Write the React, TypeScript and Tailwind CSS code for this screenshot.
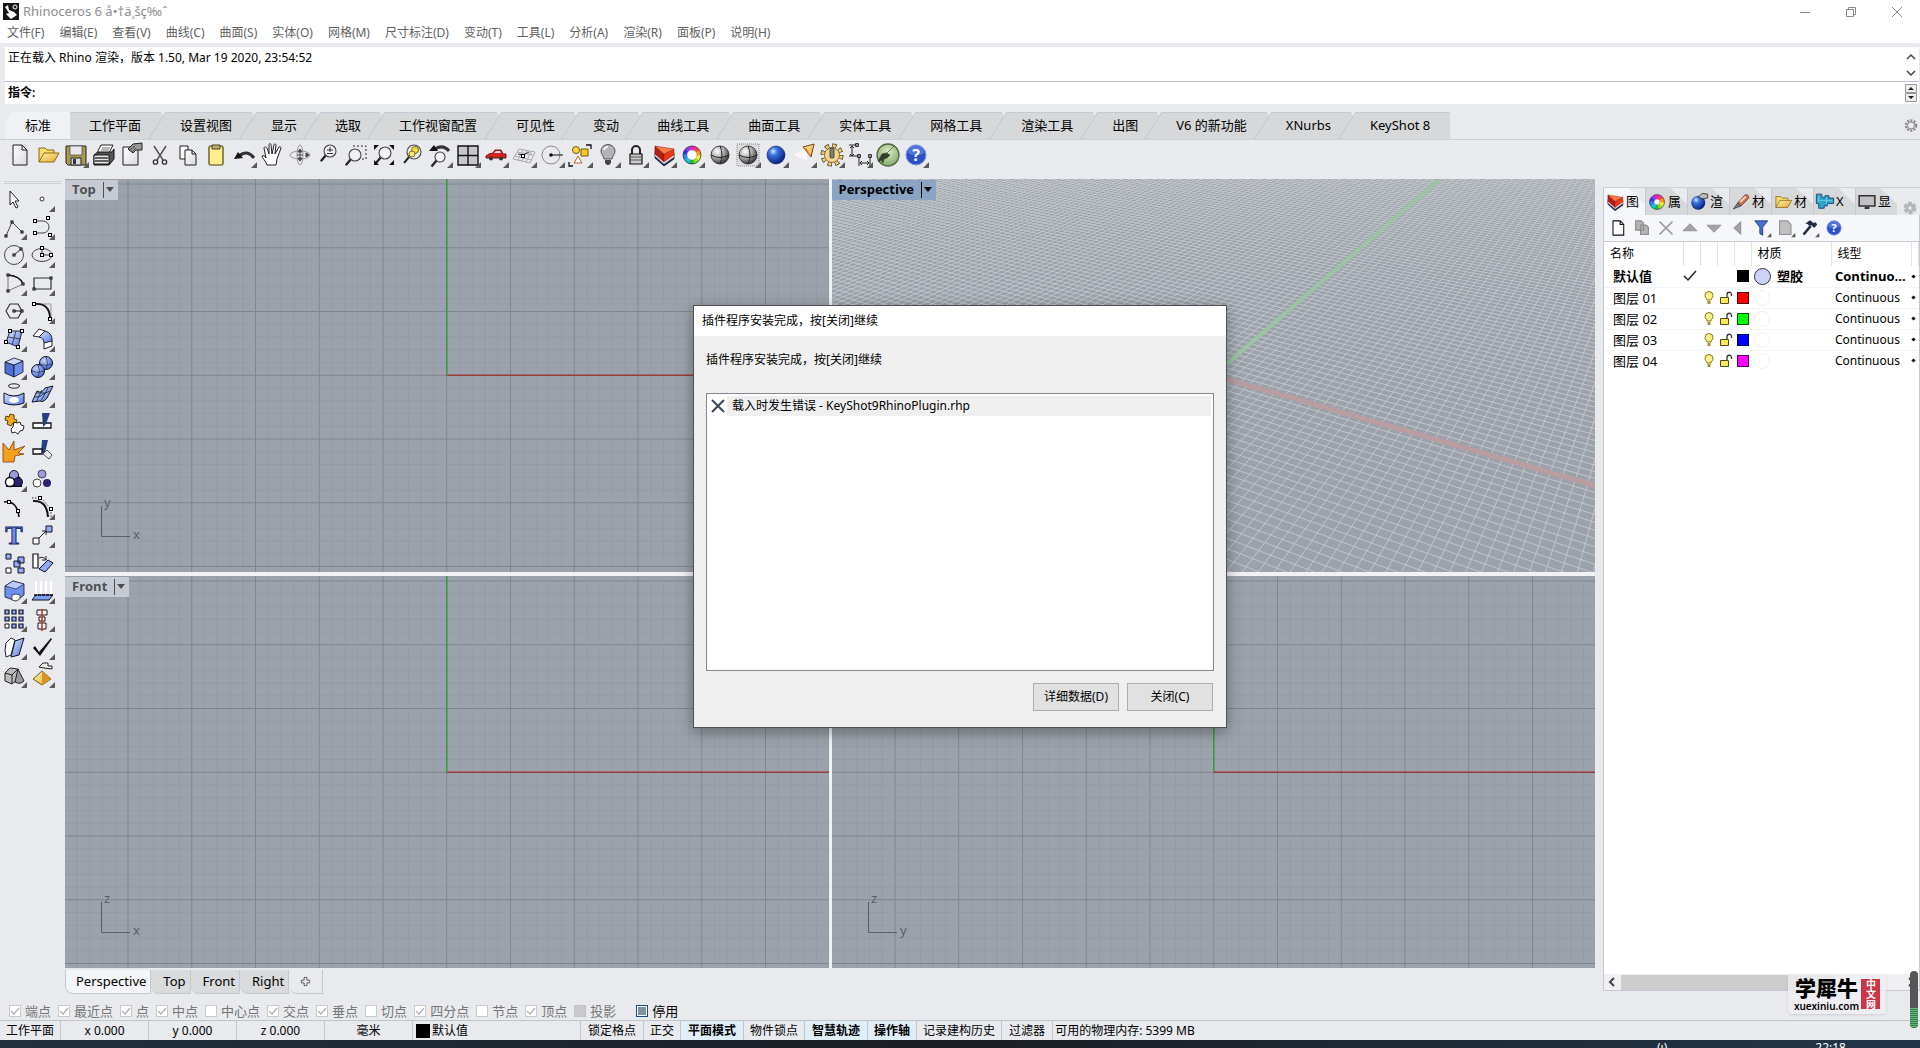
import { useState, type ReactNode } from "react";

const INK = "#1c1c1c";

type Tool = { name: string; art: ReactNode; more?: boolean };

const menus = ["文件(F)", "编辑(E)", "查看(V)", "曲线(C)", "曲面(S)", "实体(O)", "网格(M)", "尺寸标注(D)", "变动(T)", "工具(L)", "分析(A)", "渲染(R)", "面板(P)", "说明(H)"];

const toolTabs = ["标准", "工作平面", "设置视图", "显示", "选取", "工作视窗配置", "可见性", "变动", "曲线工具", "曲面工具", "实体工具", "网格工具", "渲染工具", "出图", "V6 的新功能", "XNurbs", "KeyShot 8"];

const osnaps = [
    { label: "端点", on: true },
    { label: "最近点", on: true },
    { label: "点", on: true },
    { label: "中点", on: true },
    { label: "中心点", on: false },
    { label: "交点", on: true },
    { label: "垂点", on: true },
    { label: "切点", on: false },
    { label: "四分点", on: true },
    { label: "节点", on: false },
    { label: "顶点", on: true },
];

const layers = [
    { name: "图层 01", color: "#ff0000" },
    { name: "图层 02", color: "#00ff00" },
    { name: "图层 03", color: "#0000ff" },
    { name: "图层 04", color: "#ff00ff" },
];

// Shared gradients, referenced by id from every icon
function Gradients() {
    return (
        <svg className="absolute size-0" aria-hidden="true">
            <defs>
                <radialGradient id="ballGray" cx="35%" cy="30%" r="75%">
                    <stop offset="0" stopColor="#fff" />
                    <stop offset=".5" stopColor="#a9a9a9" />
                    <stop offset="1" stopColor="#2b2b2b" />
                </radialGradient>
                <radialGradient id="ballBlue" cx="35%" cy="30%" r="75%">
                    <stop offset="0" stopColor="#d5e6ff" />
                    <stop offset=".3" stopColor="#3c73e0" />
                    <stop offset="1" stopColor="#041a72" />
                </radialGradient>
                <radialGradient id="ballSoft" cx="35%" cy="30%" r="75%">
                    <stop offset="0" stopColor="#c4d2ff" />
                    <stop offset="1" stopColor="#4464cf" />
                </radialGradient>
                <radialGradient id="ballGreen" cx="50%" cy="35%" r="70%">
                    <stop offset="0" stopColor="#dcecc8" />
                    <stop offset="1" stopColor="#7da463" />
                </radialGradient>
                <linearGradient id="paper" x1="0" y1="0" x2="1" y2="1">
                    <stop offset="0" stopColor="#fff" />
                    <stop offset="1" stopColor="#d9dade" />
                </linearGradient>
                <linearGradient id="face" x1="0" y1="0" x2="1" y2="1">
                    <stop offset="0" stopColor="#dbe5ff" />
                    <stop offset="1" stopColor="#5578dd" />
                </linearGradient>
                <linearGradient id="gold" x1="0" y1="0" x2="1" y2="1">
                    <stop offset="0" stopColor="#fff3b0" />
                    <stop offset="1" stopColor="#e5a72c" />
                </linearGradient>
            </defs>
        </svg>
    );
}

function Dots({ at, size = 3 }: { at: number[][]; size?: number }) {
    return (
        <>
            {at.map(([x, y]) => (
                <rect key={`${x}-${y}`} x={x - size / 2} y={y - size / 2} width={size} height={size} fill="#fff" stroke="#000" />
            ))}
        </>
    );
}

function Lens({ x, y, r = 5.5 }: { x: number; y: number; r?: number }) {
    return (
        <>
            <path d={`M${x - r * 0.7} ${y + r * 0.7}L${x - r * 0.7 - 5} ${y + r * 0.7 + 6}`} stroke="#222" strokeWidth="2.2" />
            <circle cx={x} cy={y} r={r} fill="#f3f4f6" fillOpacity=".7" stroke="#444" strokeWidth="1.1" />
        </>
    );
}

function ColorWheel({ cx, cy, r, w }: { cx: number; cy: number; r: number; w: number }) {
    const hues = ["#f43", "#f90", "#fe2", "#8d2", "#1b4", "#1cc", "#28f", "#33e", "#93e", "#e2b"];
    return (
        <>
            {hues.map((c, i) => {
                const a = (i / hues.length) * Math.PI * 2 - 1.2;
                const b = ((i + 1.1) / hues.length) * Math.PI * 2 - 1.2;
                return <path key={c} d={`M${cx + r * Math.cos(a)} ${cy + r * Math.sin(a)}A${r} ${r} 0 0 1 ${cx + r * Math.cos(b)} ${cy + r * Math.sin(b)}`} fill="none" stroke={c} strokeWidth={w} />;
            })}
            <circle cx={cx} cy={cy} r={r + w / 2} fill="none" stroke="#333" strokeWidth=".8" />
            <circle cx={cx} cy={cy} r={Math.max(r - w / 2, 0.5)} fill="#fff" stroke="#777" strokeWidth=".5" />
        </>
    );
}

const layerArt = (
    <>
        <path d="M5 12v5l9 8 10-7v-5z" fill="#1c2c66" stroke="#111" strokeWidth=".7" />
        <path d="M5 10v5l9 8 10-7v-5z" fill="#fff" stroke="#777" strokeWidth=".6" />
        <path d="M5 5l9 8v8l-9-8z" fill="#b81c10" stroke="#611" strokeWidth=".6" />
        <path d="M14 13l10-5v6l-10 7z" fill="#e83a1b" stroke="#8c2010" strokeWidth=".5" />
        <path d="M5 5l19 3-10 5z" fill="#fb7a45" stroke="#8c2010" strokeWidth=".5" />
    </>
);

const openArt = (
    <>
        <path d="M5 21V7h6l2 2h7v3" fill="#f7dc6e" stroke="#8a6a10" />
        <path d="M5 21l5-9h15l-5 9z" fill="url(#gold)" stroke="#8a6a10" />
    </>
);

const helpArt = (
    <>
        <circle cx="14" cy="14" r="10" fill="#2c50c8" stroke="#7c93dd" />
        <path d="M5.500 12a8.500 8.500 0 0 1 17 0c-5 3-12 3-17 0z" fill="#6b8bea" fillOpacity=".6" />
        <text x="14" y="20" fontSize="16" fontWeight="700" textAnchor="middle" fill="#fff">?</text>
    </>
);

const shadedBall = (
    <>
        <circle cx="14" cy="14" r="9" fill="url(#ballGray)" stroke="#222" strokeWidth=".8" />
        <path d="M5 14q9 5 18 0M14 5q4 9 0 18" fill="none" stroke="#222" />
    </>
);

const mainTools: Tool[] = [
    { name: "新建", art: <path d="M7 4h9l5 5v15H7zM16 4v5h5" fill="url(#paper)" stroke={INK} /> },
    { name: "打开", art: openArt },
    { name: "保存", more: true, art: <><path d="M4 5h20v19H6l-2-2z" fill="#a89a50" stroke="#222" /><path d="M8 5h12v9H8z" fill="#e8e8ea" stroke="#444" strokeWidth=".7" /><path d="M9 17h10v7H9z" fill="#ddd" stroke="#222" /><path d="M11 18h3v5h-3z" fill="#333" /></> },
    { name: "打印", art: <><path d="M11 4h12l-4 8H7z" fill="#fff" stroke="#222" /><path d="M12 7h8M11 9h8" stroke="#777" /><path d="M4 14l4-3h14l2-3v10l-5 6H4z" fill="#555" stroke="#111" /><path d="M4 14h15v9H4z" fill="#e8e8e8" stroke="#111" /><path d="M5 17h13M5 20h13" stroke="#333" strokeWidth="1.400" /></> },
    { name: "文件属性", art: <><path d="M5 6h15v18H5z" fill="url(#paper)" stroke={INK} /><path d="M10 8l5-5 9-1v7h-6l-3 3z" fill="#999" stroke="#222" /><path d="M12 9l5-4M14 11l4-4" stroke="#222" strokeWidth=".7" /></> },
    { name: "剪切", art: <><path d="M8 5l9 14M20 5l-9 14" stroke="#555" strokeWidth="1.500" /><circle cx="9.500" cy="21" r="2.200" fill="none" stroke="#333" strokeWidth="1.300" /><circle cx="18.500" cy="21" r="2.200" fill="none" stroke="#333" strokeWidth="1.300" /></> },
    { name: "复制", art: <><path d="M6 5h8v13H6z" fill="#fff" stroke={INK} /><path d="M11 9h7l4 4v11H11zM18 9v4h4" fill="url(#paper)" stroke={INK} /></> },
    { name: "粘贴", art: <><rect x="7" y="5" width="14" height="19" rx="1.500" fill="#fdf08c" stroke="#4a4210" strokeWidth="1.200" /><path d="M10 4h8v4h-8z" fill="#b8b27a" stroke="#4a4210" /></> },
    { name: "复原", more: true, art: <><path d="M9 15q8-7 15 2" fill="none" stroke="#333" strokeWidth="3" /><path d="M4 18l4-7 5 6z" fill="#111" /></> },
    { name: "平移", art: <path d="M9 24c-1-4-5-7-5-9 1-1 3 0 4 2L6 7c1-2 2-1 3 0l2 6V4c0-2 2-2 2 0l1 9 2-9c0-2 2-1 2 0l-1 9 4-7c1-1 2 0 2 1l-4 11-1 6z" fill="#fff" stroke="#222" /> },
    { name: "旋转视图", art: <><ellipse cx="14" cy="14" rx="10" ry="4" fill="none" stroke="#999" /><ellipse cx="14" cy="14" rx="3" ry="10" fill="none" stroke="#999" /><path d="M14 10v8M11 14h6M14 8l-2 3h4zM14 20l-2-3h4zM20 12l3 2-3 2z" fill="#444" stroke="#444" /></> },
    { name: "缩放", art: <><Lens x={16} y={10} r={6} /><path d="M13 9h6M16 6v5M13 12.500h6" stroke="#333" /></> },
    { name: "框选缩放", art: <><path d="M11 5h13v13H14" fill="none" stroke="#222" strokeDasharray="2 2" /><Lens x={13} y={14} r={6} /></> },
    { name: "缩放至最大范围", art: <><Lens x={15} y={12} r={6} /><path d="M4 4h5L4 9zM24 4v5l-5-5zM4 24v-5l5 5zM24 24h-5l5-5z" fill="#111" /></> },
    { name: "缩放至选取物件", art: <><Lens x={16} y={11} r={7} /><circle cx="17" cy="9" r="3.500" fill="#f2dc39" stroke="#776b10" /><circle cx="14" cy="13" r="3" fill="#f7e96d" stroke="#776b10" /></> },
    { name: "复原视图", more: true, art: <><path d="M9 8q8-5 14 2" fill="none" stroke="#333" strokeWidth="3" /><path d="M3 10l5-6 4 6z" fill="#111" /><Lens x={14} y={16} r={5} /></> },
    { name: "四视图", more: true, art: <><path d="M4 5h20v19H4z" fill="#c6c8cc" stroke="#111" strokeWidth="1.400" /><path d="M14 5v19M4 14.500h20" stroke="#111" strokeWidth="1.400" /></> },
    { name: "设置视图", more: true, art: <><path d="M4 15l3-2 4-1 2-3h6l2 4h3v4H4z" fill="#d2241f" stroke="#7c100e" /><path d="M12 12l2-2h4l1 2z" fill="#cfe0ef" /><circle cx="9" cy="17.500" r="2" fill="#333" /><circle cx="19" cy="17.500" r="2" fill="#333" /></> },
    { name: "工作平面", more: true, art: <><path d="M9 8l16 3-5 11L3 18zM7 11l16 3M5 15l16 4M13 9L8 19M17 10l-5 10M21 11l-5 10" fill="none" stroke="#aaa" /><path d="M13 14l6-3M13 14l-5-1" stroke="#333" /><Dots at={[[13, 15]]} /></> },
    { name: "物件锁点", more: true, art: <><circle cx="13" cy="14" r="9" fill="none" stroke="#888" /><path d="M13 14h12" stroke="#111" /><circle cx="13" cy="14" r="1.800" fill="#111" /></> },
    { name: "选取", more: true, art: <><circle cx="10" cy="9" r="3.500" fill="#ffd53d" stroke="#6b5710" /><path d="M15 8h7v7h-7z" fill="#ffc91f" stroke="#6b5710" /><path d="M12 15l4 7H8z" fill="#fff" stroke="#b5632c" /><path d="M20 4h5v4M3 21v4h4" fill="none" stroke="#111" strokeWidth="1.300" /></> },
    { name: "显示与隐藏", more: true, art: <><path d="M10 18c0-3-3-4-3-8a7 6.500 0 0 1 14 0c0 4-3 5-3 8z" fill="#b3b3b6" stroke="#555" /><path d="M10 9a4 4 0 0 1 4-3" stroke="#fff" strokeWidth="1.500" fill="none" /><path d="M11 19h6v3l-2 2h-2l-2-2z" fill="#444" /></> },
    { name: "锁定", more: true, art: <><path d="M10 13V9a4 4 0 0 1 8 0v4" fill="none" stroke="#222" strokeWidth="2" /><path d="M8 13h12v10H8z" fill="#ccc" stroke="#111" strokeWidth="1.200" /><path d="M9 16h10M9 19h10" stroke="#555" /></> },
    { name: "图层", more: true, art: layerArt },
    { name: "颜色", more: true, art: <ColorWheel cx={14} cy={14} r={7} w={4} /> },
    { name: "着色", art: shadedBall },
    { name: "半透明着色", more: true, art: <><path d="M3 3h22v22H3z" fill="#dcdde0" stroke="#888" strokeDasharray="1 1" />{shadedBall}</> },
    { name: "渲染", more: true, art: <circle cx="14" cy="14" r="9" fill="url(#ballBlue)" stroke="#0a1a60" strokeWidth=".6" /> },
    { name: "灯光", more: true, art: <><path d="M4 14L17 5v15z" fill="#fff" fillOpacity=".6" /><path d="M13 6l11-3-3 13z" fill="url(#gold)" stroke="#7a3c10" /><path d="M13 6l8 10-4-8z" fill="#ef7b22" /></> },
    { name: "选项", more: true, art: <><circle cx="14" cy="14" r="9" fill="none" stroke="#4a3a10" strokeWidth="5" strokeDasharray="4.069 3" /><circle cx="14" cy="14" r="9" fill="none" stroke="#f0cd78" strokeWidth="3.500" strokeDasharray="2.869 4.200" strokeDashoffset="-.6" /><circle cx="14" cy="14" r="7.500" fill="#f3d58b" stroke="#5d4a18" strokeWidth=".7" /><rect x="12" y="7" width="4" height="10" rx="1" fill="#7d8573" stroke="#333" strokeWidth=".8" /></> },
    { name: "尺寸标注", more: true, art: <><path d="M3 4h9M6 6v9M4 7l2-2 2 2M4 13l2 2 2-2M3 15h10v10M24 15v10M15 22h7M16 20l-2 2 2 2M21 20l2 2-2 2" fill="none" stroke="#222" /><Dots at={[[11, 4], [13, 15], [24, 15]]} size={2.5} /></> },
    { name: "Grasshopper", art: <><circle cx="14" cy="14" r="11" fill="url(#ballGreen)" stroke="#55683f" strokeWidth="1.300" /><path d="M4 20l4-7 4-1 4 2-3 3-3 1-1 4-2-3-2 2zM12 13l8-8" fill="#2f3d28" stroke="#45583a" strokeWidth=".8" /></> },
    { name: "说明", more: true, art: helpArt },
];

const sideTools: Tool[] = [
    { name: "选取", art: <path d="M10 6v14l3-3 3 6 2-1-3-6h4z" fill="#fff" stroke="#222" /> },
    { name: "单点", more: true, art: <circle cx="14" cy="14" r="2" fill="#fff" stroke="#333" /> },
    { name: "多重直线", more: true, art: <><path d="M6 23L12 9l10 10" fill="none" stroke="#444" /><Dots at={[[6, 23], [12, 9], [22, 19]]} size={2} /></> },
    { name: "控制点曲线", more: true, art: <><path d="M7 8h8a6 6 0 0 1 0 12H7" fill="none" stroke="#444" /><Dots at={[[7, 8], [7, 20], [20, 5], [22, 22]]} /></> },
    { name: "圆", more: true, art: <><circle cx="14" cy="14" r="9.500" fill="none" stroke="#444" /><path d="M14 14l7-6" stroke="#333" /><Dots at={[[14, 14], [21, 8]]} size={2} /></> },
    { name: "椭圆", more: true, art: <><ellipse cx="14" cy="14" rx="10" ry="6.500" fill="none" stroke="#444" /><path d="M14 14h9M14 14V8" stroke="#333" /><Dots at={[[14, 14], [14, 7], [23, 14]]} /></> },
    { name: "圆弧", more: true, art: <><path d="M8 22V6q13 1 15 9z" fill="none" stroke="#777" /><path d="M8 6q12 1 15 9" fill="none" stroke="#111" strokeWidth="1.400" /><Dots at={[[8, 6], [8, 22], [23, 15]]} size={2} /></> },
    { name: "矩形", more: true, art: <><path d="M6 9h17v11H6z" fill="none" stroke="#333" strokeWidth="1.200" /><Dots at={[[6, 20], [23, 9]]} size={2} /></> },
    { name: "多边形", more: true, art: <><path d="M6 14l4-7h8l4 7-4 7h-8z" fill="none" stroke="#333" strokeWidth="1.200" /><path d="M14 14h8" stroke="#111" /><Dots at={[[14, 14], [22, 14]]} size={2} /></> },
    { name: "曲线圆角", more: true, art: <><path d="M6 7h17v15" fill="none" stroke="#999" /><path d="M7 7q15-1 15 15" fill="none" stroke="#111" strokeWidth="1.800" /><Dots at={[[6, 7], [22, 22]]} /></> },
    { name: "指定三或四个角建立曲面", more: true, art: <><path d="M10 6h12l-4 16-12-5z" fill="url(#face)" stroke="#223" /><path d="M16 6l-4 14M8 12l13 2" stroke="#445" /><Dots at={[[10, 6], [22, 6], [18, 22], [6, 17]]} /></> },
    { name: "曲面圆角", more: true, art: <><path d="M5 11l6-7 6 2-6 6z" fill="#fff" stroke="#222" /><path d="M11 12l6-6q8 2 7 11l-8 1q0-5-5-6z" fill="url(#face)" stroke="#223" /><path d="M16 18l8-2v5l-8 3z" fill="#fff" stroke="#222" /></> },
    { name: "立方体", more: true, art: <><path d="M5 9l9 3v12l-9-4z" fill="#4d6fd6" stroke="#112" strokeWidth=".8" /><path d="M14 12l9-4v11l-9 5z" fill="#7090ee" stroke="#112" strokeWidth=".8" /><path d="M5 9l9-4 9 3-9 4z" fill="#c8d7ff" stroke="#112" strokeWidth=".8" /></> },
    { name: "布尔运算联集", more: true, art: <><circle cx="18" cy="10" r="6.500" fill="url(#ballSoft)" stroke="#112" /><circle cx="10" cy="18" r="6.500" fill="url(#ballSoft)" stroke="#112" /><path d="M12 11q6 3 12 0M18 4q3 6 0 12M4 18q6 3 12 0M10 12q3 6 0 12" fill="none" stroke="#123" strokeWidth=".6" /></> },
    { name: "投影曲线", more: true, art: <><ellipse cx="14" cy="5" rx="5.500" ry="2.200" fill="none" stroke="#222" /><path d="M4 12q10 6 20 0v10q-10 4-20 0z" fill="url(#face)" stroke="#112" /><ellipse cx="14" cy="19" rx="5" ry="3" fill="#fff" /></> },
    { name: "网格", more: true, art: <><path d="M4 21l5-11q5 3 8-3l8-2-6 12q-4 5-7 3z" fill="url(#face)" stroke="#112" /><path d="M8 21l6-12M13 20l7-13M6 16q7 0 9-3l7-3M8 12l9 0" stroke="#123" fill="none" strokeWidth=".8" /></> },
    { name: "组合", art: <><path d="M6 7l3 1 1-3 4 1v4l3 1-1 4-3-1-2 3-4-2 1-3-3-1z" fill="#f5a81c" stroke="#5b3b08" /><path d="M14 13l3 1 3-1 1 3 3 1-1 4-3 1-2 3-3-2-3 1-1-4 2-2z" fill="#fff" stroke="#222" /></> },
    { name: "修剪", art: <><path d="M5 14h18v5H5z" fill="#fff" stroke="#111" strokeWidth="1.300" /><path d="M14 4h8l-4 11-3 3z" fill="#24407e" /></> },
    { name: "炸开", art: <path d="M3 25V6l6 7 5-9v9l11-4-7 7 6 1-9 2-1 6z" fill="#f6a01d" stroke="#7c3c0b" strokeWidth=".8" /> },
    { name: "分割", art: <><path d="M14 3h6l-3 13h-4z" fill="#24407e" /><path d="M5 12h9v5H5z" fill="#fff" stroke="#111" strokeWidth="1.300" /><path d="M15 17l4-4 5 5-3 4z" fill="#e3e8f6" stroke="#555" /></> },
    { name: "群组", more: true, art: <><path d="M14 7l7 8v6H7v-6z" stroke="#112" strokeWidth="2" fill="none" /><circle cx="14" cy="10" r="4.500" fill="#9c9bdc" stroke="#112" /><circle cx="18" cy="17" r="4.500" fill="#2c2270" stroke="#112" /><circle cx="10" cy="17" r="4.500" fill="#fff" stroke="#112" strokeWidth="1.400" /></> },
    { name: "解散群组", art: <><circle cx="14" cy="9" r="4" fill="#9c9bdc" stroke="#445" /><circle cx="19" cy="18" r="4" fill="#2c2270" /><circle cx="9" cy="18" r="4" fill="#fff" stroke="#444" /></> },
    { name: "打开编辑点", art: <><path d="M4 9q13-2 15 15" fill="none" stroke="#111" strokeWidth="1.600" /><Dots at={[[9, 9], [18, 18]]} /></> },
    { name: "打开控制点", more: true, art: <><path d="M5 8q14-1 15 16" fill="none" stroke="#111" strokeWidth="2" /><path d="M4 5h9l10 11v8" fill="none" stroke="#333" strokeDasharray="1.500 1.500" /><Dots at={[[12, 5], [23, 16]]} /></> },
    { name: "文字", art: <text x="14" y="23" fontSize="26" fontWeight="700" fontFamily="Liberation Serif" textAnchor="middle" fill="#6d8fe8" stroke="#1b2c6e">T</text> },
    { name: "移动", more: true, art: <><path d="M10 18l8-8M14 10h4v4" fill="none" stroke="#222" /><path d="M5 17h6v6H5z" fill="#fff" stroke="#111" /><path d="M18 5h6v6h-6z" fill="#93abf4" stroke="#112" /></> },
    { name: "复制物件", art: <><path d="M6 5h5v5H6zM18 8h6v6h-6zM14 12h6v6h-6zM18 19h6v5h-6z" fill="#93abf4" stroke="#112" /><path d="M6 19h5v5H6z" fill="#fff" stroke="#111" /></> },
    { name: "旋转", art: <><path d="M5 5h5v14H5z" fill="#fff" stroke="#111" strokeWidth="1.200" /><path d="M11 9q5-2 7 2M18 7v4h-4" fill="none" stroke="#222" /><path d="M11 20l9-9 5 3-8 9z" fill="#93abf4" stroke="#112" /></> },
    { name: "实体工具", more: true, art: <><path d="M5 9l8-5 11 3v11l-8 6-11-4z" fill="#6e8fec" stroke="#112" strokeWidth=".8" /><path d="M5 9l8-5 11 3-8 5z" fill="#b9cbff" stroke="#112" strokeWidth=".6" /><path d="M12 18l4-1 4 1v4l-4 2-4-1z" fill="#fff" stroke="#333" strokeWidth=".8" /></> },
    { name: "曲线投影", more: true, art: <><path d="M8 4v13M13 4v13M18 4v13M23 4v13" stroke="#fff" strokeWidth="2" /><path d="M4 23l4-5h17l-4 5z" fill="#7fa0f0" stroke="#112" /><path d="M6 18h19" stroke="#112" strokeWidth="1.500" strokeDasharray="3 1" /></> },
    { name: "阵列", more: true, art: <><path d="M5 5h4v4H5zM12 5h4v4h-4zM19 5h4v4h-4zM5 12h4v4H5zM12 12h4v4h-4zM19 12h4v4h-4zM12 19h4v4h-4zM19 19h4v4h-4z" fill="#93abf4" stroke="#112" strokeWidth="1.200" /><path d="M5 19h4v4H5z" fill="#fff" stroke="#111" /></> },
    { name: "对齐", more: true, art: <><path d="M9 5h10v5H9zM11 12h6v4h-6zM10 18h8v6h-8z" fill="#fff" stroke="#111" /><path d="M14 4v22" stroke="#d22" strokeWidth="1.500" /></> },
    { name: "变形", more: true, art: <><path d="M6 10l5-5 4 2-4 15-5 2q-2-7 0-14z" fill="#fff" stroke="#222" /><path d="M15 8l9-3-5 17-8 2z" fill="url(#face)" stroke="#112" /></> },
    { name: "检查", more: true, art: <path d="M5 15l2-2 4 6L23 5l1 1-12 17z" fill="#111" /> },
    { name: "实体", more: true, art: <><path d="M5 12l5-5 8 1v10l-6 5-7-3z" fill="#bbb" stroke="#222" /><path d="M5 12l7 2 6-6M12 14v9" fill="none" stroke="#222" /><path d="M18 8l6 12q-4 4-9 1z" fill="#999" stroke="#222" /></> },
    { name: "挤出", more: true, art: <><path d="M14 10l9 8-9 6-9-6z" fill="url(#gold)" stroke="#7a5510" /><path d="M14 10v14l9-6z" fill="#d89525" /><path d="M11 6l4-4h5v3h4v3l-8-1z" fill="#eee" stroke="#222" /></> },
];

const panelTabs = [
    { label: "图", art: layerArt },
    { label: "属", art: <ColorWheel cx={14} cy={14} r={6.500} w={6} /> },
    { label: "渲", art: <><circle cx="13" cy="15" r="9" fill="url(#ballBlue)" /><path d="M13 8l5-5 7 1v5l-6 1z" fill="#bbb" stroke="#222" /></> },
    { label: "材", art: <><path d="M4 23l6-8 4 4z" fill="#777" stroke="#444" /><path d="M10 15l9-10q5-1 5 4L14 19z" fill="#cf7351" stroke="#6c3320" /><path d="M13 14l7-7" stroke="#f4cbb4" strokeWidth="2.500" /></> },
    { label: "材", art: openArt },
    { label: "X", art: <><path d="M3 4h7v4h4V6h5v3h6v7h-8v3h-4v3H6v-6H3z" fill="#2ba7cc" stroke="#136" /><path d="M6 7v8M6 12h17M16 8v9" stroke="#7fd2ea" /></> },
    { label: "显", art: <><path d="M4 6h20v13H4z" fill="#bfc1c4" stroke="#333" strokeWidth="2" /><path d="M11 20h6v3h-6z" fill="#333" /></> },
];

const panelTools: Tool[] = [
    { name: "新图层", art: <path d="M7 4h10l5 5v15H7zM17 4v5h5" fill="#fff" stroke="#111" strokeWidth="1.500" /> },
    { name: "新子图层", art: <path d="M5 4h8l3 3v10H5zM12 10h8l3 3v10H12z" fill="#b4b4b4" stroke="#8c8c8c" strokeWidth="1.500" /> },
    { name: "删除", art: <path d="M5 5l18 18M23 5L5 23" stroke="#a2a2a2" strokeWidth="2.500" /> },
    { name: "上移", art: <path d="M14 8l10 10H4z" fill="#a2a2a2" stroke="#888" /> },
    { name: "下移", art: <path d="M14 20L4 10h20z" fill="#a2a2a2" stroke="#888" /> },
    { name: "上移一层", art: <path d="M8 14l10-9v18z" fill="#a2a2a2" stroke="#888" /> },
    { name: "过滤器", more: true, art: <path d="M4 4h18l-7 9v11l-4-2v-9z" fill="#4a70cf" stroke="#1b3480" strokeWidth="1.200" /> },
    { name: "报告", more: true, art: <path d="M5 4h11l5 5v14H5z" fill="#c0c0c0" stroke="#929292" strokeWidth="1.500" /> },
    { name: "工具", more: true, art: <><path d="M7 8l7-5 5 4 3-1 2 3-4 5-4-4-3 1-3-3z" fill="#222b44" /><path d="M15 11L5 23" stroke="#222b44" strokeWidth="3.500" /></> },
    { name: "说明", art: helpArt },
];

function ToolButton({ tool, size = "size-7" }: { tool: Tool; size?: string }) {
    return (
        <button type="button" aria-label={tool.name} className={`${size} shrink-0`}>
            <svg viewBox="0 0 28 28" className="size-full" fill="none">
                {tool.art}
                {tool.more && <path d="M27 21v6h-6z" fill="#5a5a5a" />}
            </svg>
        </button>
    );
}

function TitleBar() {
    return (
        <header className="flex h-[23px] shrink-0 items-center bg-white pl-[3px] text-[13px] text-[#8d8d8d]">
            <svg viewBox="0 0 16 17" className="mr-1 h-[17px] w-4">
                <path d="M0 0h16v17H0z" fill="#151515" />
                <path d="M2 4l3-2 1 5 5 2 3 3-6 4-5-5 3-1z" fill="#fff" />
                <circle cx="12" cy="4" r="2" fill="none" stroke="#fff" />
            </svg>
            <h1 className="grow">Rhinoceros 6 å•†ä¸šç‰ˆ</h1>
            <button type="button" aria-label="最小化" className="flex w-[46px] justify-center">
                <svg viewBox="0 0 12 12" className="size-3"><path d="M1 6.500h10" stroke="#888" /></svg>
            </button>
            <button type="button" aria-label="还原" className="flex w-[46px] justify-center">
                <svg viewBox="0 0 12 12" className="size-3"><path d="M1.500 3.500h7v7h-7zM3.500 3V1.500h7v7H9" fill="none" stroke="#888" /></svg>
            </button>
            <button type="button" aria-label="关闭" className="flex w-[46px] justify-center">
                <svg viewBox="0 0 12 12" className="size-3"><path d="M1 1l10 10M11 1L1 11" stroke="#888" /></svg>
            </button>
        </header>
    );
}

function CommandArea() {
    return (
        <section className="shrink-0 border-y-4 border-[#e9eaee] pr-px pb-1 pl-[5px]">
            <div className="flex h-[35px] border-b border-[#b9bfcc] bg-white">
                <p className="grow pl-[3px] leading-[22px]">正在载入 Rhino 渲染，版本 1.50, Mar 19 2020, 23:54:52</p>
                <svg viewBox="0 0 18 34" className="w-[18px]" fill="none" stroke="#444" strokeWidth="1.500">
                    <path d="M6 12l4-4 4 4M6 24l4 4 4-4" />
                </svg>
            </div>
            <div className="flex h-[22px] items-center bg-white">
                <label htmlFor="command" className="pl-[3px] font-semibold">指令:</label>
                <input id="command" className="min-w-0 grow px-1 outline-none" />
                <svg viewBox="0 0 18 20" className="h-5 w-[18px]">
                    <path d="M4.500 1.500h11v8h-11zM4.500 10.500h11v8h-11z" fill="#eee" stroke="#999" />
                    <path d="M10 4l3 3H7zM10 16l3-3H7z" fill="#222" />
                </svg>
            </div>
        </section>
    );
}

function ToolTabs() {
    const [active, setActive] = useState("标准");
    return (
        <div className="flex h-7 shrink-0 items-stretch border-b border-[#cdd0d9] pl-[6px] text-[13px]">
            {toolTabs.map((tab, i) => (
                <button
                    key={tab}
                    type="button"
                    onClick={() => setActive(tab)}
                    className={`relative pl-[19px] whitespace-nowrap ${tab.length > 3 ? "pr-5" : "pr-[19px]"} ${active === tab ? "bg-[#f0f1f5]" : "border-t border-[#c6cad4] bg-[#d7d8da]"}`}
                >
                    {i !== 1 && (
                        <svg viewBox="0 0 18 28" className="absolute -top-px right-full -mr-[5px] h-7 w-[18px]">
                            {i === 0 ? <path d="M13 0h5L13 10z" fill="#e9eaee" /> : <path d="M13 0h5l-3 5z" fill="#e9eaee" />}
                            <path d="M18 0L0 28" stroke={i === 0 ? "#e9eaee" : "#c3c6ce"} fill="none" />
                        </svg>
                    )}
                    {tab}
                </button>
            ))}
            <span className="grow" />
            <svg viewBox="0 0 14 14" className="mr-[2px] w-[14px]">
                <circle cx="7" cy="7" r="5" fill="none" stroke="#8c8c8c" strokeWidth="2.500" strokeDasharray="2 1.200" />
                <circle cx="7" cy="7" r="3.500" fill="#e9eaee" stroke="#8c8c8c" />
            </svg>
        </div>
    );
}

function FlatGrid() {
    const minor = 12.75;
    const lines: ReactNode[] = [];
    for (let i = -90; i <= 90; i++) {
        const p = i * minor;
        const stroke = i % 5 === 0 ? "#80868f" : "#929aa3";
        lines.push(<path key={i} d={`M${p} -1200V1200M-1200 ${p}H1200`} stroke={stroke} strokeWidth={i % 5 === 0 ? 1 : 0.8} />);
    }
    return (
        <svg className="absolute inset-0 size-full">
            <svg x="50%" y="50%" overflow="visible">
                {lines}
                <path d="M0 0H1200" stroke="#9b3c3e" strokeWidth="1.500" />
                <path d="M0 0V-1200" stroke="#3f9642" strokeWidth="1.500" />
            </svg>
        </svg>
    );
}

// Ground plane seen through a 50mm lens, 30° above the horizon
function PerspectiveGrid() {
    const dist = 84;
    const focal = 821;
    const size = 130;
    const near = 8;
    const project = (x: number, y: number) => {
        const depth = dist - 0.433 * x + 0.75 * y;
        return `${((focal * (0.866 * x + 0.5 * y)) / depth).toFixed(1)} ${((-focal * (-0.25 * x + 0.433 * y)) / depth).toFixed(1)}`;
    };
    let d = "";
    for (let i = -size; i <= size; i++) {
        const y0 = Math.max(-size, (near - dist + 0.433 * i) / 0.75);
        const x1 = Math.min(size, (dist + 0.75 * i - near) / 0.433);
        if (y0 < size) d += `M${project(i, y0)}L${project(i, size)}`;
        if (x1 > -size) d += `M${project(-size, i)}L${project(x1, i)}`;
    }
    return (
        <svg className="absolute inset-0 size-full">
            <svg x="50%" y="50%" overflow="visible" fill="none">
                <path d={d} stroke="#c9cdd1" strokeWidth="1" strokeOpacity=".8" />
                <path d={`M0 0L${project(100, 0)}`} stroke="#b99da1" strokeWidth="5" />
                <path d={`M0 0L${project(0, size)}`} stroke="#9cc3a3" strokeWidth="4" />
            </svg>
        </svg>
    );
}

function Viewport({ title, current, axes, children }: { title?: string; current?: boolean; axes?: string[]; children: ReactNode }) {
    return (
        <section className="relative overflow-hidden bg-[#9ca2ab]">
            {children}
            {title && (
                <button
                    type="button"
                    className={`relative mt-px flex h-5 items-center pl-[7px] font-['Open_Sans'] text-[13px] font-bold ${current ? "bg-[#8ba4c3] text-black" : "bg-[#c6cbd3] text-[#4d4f53]"}`}
                >
                    {title}
                    <svg viewBox="0 0 18 18" className="ml-1 size-[18px]">
                        <path d="M3.500 1v16" stroke="currentColor" />
                        <path d="M6 6h8l-4 5z" fill="currentColor" />
                    </svg>
                </button>
            )}
            {axes && (
                <svg viewBox="0 0 50 50" className="absolute bottom-[29px] left-[34px] size-[50px]" fill="#5a6068" fontSize="13">
                    <path d="M2.500 13v30.500H31" fill="none" stroke="#5a6068" />
                    <text x="5" y="14">{axes[0]}</text>
                    <text x="34" y="46">{axes[1]}</text>
                </svg>
            )}
        </section>
    );
}

function ViewTabs() {
    return (
        <nav className="flex h-8 shrink-0 items-start pt-[2px] text-[13px]">
            <button type="button" className="h-6 rounded-bl-lg border border-t-0 border-[#c3c8d3] bg-[#f4f5f8] pr-1 pl-[10px]">Perspective</button>
            {["Top", "Front", "Right"].map((v) => (
                <button key={v} type="button" className="h-6 rounded-bl-lg border-r border-b border-[#c3c8d3] bg-[#dadbdc] pr-1 pl-3">{v}</button>
            ))}
            <button type="button" aria-label="新增工作视窗" className="flex h-6 w-[34px] items-center justify-center rounded-bl-lg border-r border-b border-[#c3c8d3]">
                <svg viewBox="0 0 12 12" className="size-[11px]"><path d="M4.500 1.500h3v3h3v3h-3v3h-3v-3h-3v-3h3z" fill="none" stroke="#555" /></svg>
            </button>
        </nav>
    );
}

function Bulb() {
    return (
        <svg viewBox="0 0 12 14" className="mx-auto h-[14px] w-3">
            <path d="M4 9C4 7 2 7 2 4.500a4 4 0 0 1 8 0C10 7 8 7 8 9z" fill="#fdf28a" stroke="#8a7612" />
            <path d="M4.500 10h3v3h-3z" fill="#a8922c" />
        </svg>
    );
}

function OpenLock() {
    return (
        <svg viewBox="0 0 14 14" className="mx-auto h-[14px] w-[14px]">
            <path d="M1.500 6.500h8v6h-8z" fill="#fbe75e" stroke="#54480c" />
            <path d="M8 6V3.500a2 2 0 0 1 4.500 0V5" fill="none" stroke="#333" strokeWidth="1.300" />
        </svg>
    );
}

function Arrow({ className = "" }: { className?: string }) {
    return <svg viewBox="0 0 10 12" className={`h-3 w-[10px] ${className}`}><path d="M7 2L3 6l4 4" fill="none" stroke="#444" strokeWidth="2" /></svg>;
}

function LayerPanel() {
    return (
        <aside className="flex w-[325px] shrink-0 flex-col pt-2 pb-[9px] pl-2">
            <div className="flex h-7 shrink-0 items-stretch border-t border-[#cfd2da]">
                {panelTabs.map((tab, i) => (
                    <button
                        key={i}
                        type="button"
                        className={`flex w-[42px] items-center border-l border-[#c3c8d3] text-[13px] [clip-path:polygon(0_0,60%_0,100%_60%,100%_100%,0_100%)] ${i === 0 ? "bg-[#f6f7fa]" : "bg-[#d7d8da]"}`}
                    >
                        <svg viewBox="0 0 28 28" className="size-[22px] shrink-0" fill="none">{tab.art}</svg>
                        {tab.label}
                    </button>
                ))}
                <svg viewBox="0 0 14 14" className="mt-auto ml-[6px] size-[14px]">
                    <circle cx="7" cy="7" r="4" fill="none" stroke="#b4b6ba" strokeWidth="5" strokeDasharray="3 1.200" />
                    <circle cx="7" cy="7" r="3.500" fill="none" stroke="#b4b6ba" strokeWidth="2.500" />
                </svg>
            </div>
            <div className="flex min-h-0 grow flex-col border border-t-0 border-[#c3c8d3] bg-white">
                <div className="flex h-[27px] shrink-0 items-center gap-1 border-b border-[#c8cbd2] bg-[#f6f7fa] pl-1">
                    {panelTools.map((t) => <ToolButton key={t.name} tool={t} size="size-5" />)}
                </div>
                <table className="w-full table-fixed text-left">
                    <colgroup>
                        <col className="w-[79px]" />
                        <col className="w-[17px]" />
                        <col className="w-[17px]" />
                        <col className="w-[17px]" />
                        <col className="w-[17px]" />
                        <col className="w-20" />
                        <col className="w-20" />
                        <col />
                    </colgroup>
                    <thead>
                        <tr className="h-6 [&>*]:border-r [&>*]:border-[#e1e3e8] [&>*]:font-normal">
                            <th className="pl-[6px]">名称</th>
                            <td /><td /><td /><td />
                            <th className="pl-[6px]">材质</th>
                            <th className="pl-[6px]">线型</th>
                            <td />
                        </tr>
                    </thead>
                    <tbody className="text-[13px] [&_tr]:h-[21px] [&_td]:leading-5">
                        <tr className="font-bold">
                            <td className="pl-[9px]">默认值</td>
                            <td><svg viewBox="0 0 14 12" className="h-3 w-[14px]"><path d="M1 6l4 4 8-9" fill="none" stroke="#222" strokeWidth="1.500" /></svg></td>
                            <td /><td />
                            <td><div className="mx-auto size-3 bg-black" /></td>
                            <td>
                                <div className="flex items-center gap-[6px] pl-[3px]">
                                    <span className="size-[17px] rounded-full border border-[#333] bg-[#cdd2f8]" />
                                    塑胶
                                </div>
                            </td>
                            <td className="pl-1 font-['Open_Sans'] whitespace-nowrap">Continuo...</td>
                            <td><div className="ml-px size-[3px] rotate-45 bg-black" /></td>
                        </tr>
                        {layers.map((l) => (
                            <tr key={l.name} className="border-t border-[#f3f4f6]">
                                <td className="pl-[9px]">{l.name}</td>
                                <td />
                                <td><Bulb /></td>
                                <td><OpenLock /></td>
                                <td><div className="mx-auto size-3 border border-black/70" style={{ backgroundColor: l.color }} /></td>
                                <td><div className="ml-[3px] size-4 rounded-full border border-[#f0f0f2]" /></td>
                                <td className="pl-1 text-xs">Continuous</td>
                                <td><div className="ml-px size-[3px] rotate-45 bg-black" /></td>
                            </tr>
                        ))}
                    </tbody>
                </table>
                <div className="mt-auto flex h-4 items-center bg-[#f0f0f2] px-[3px]">
                    <Arrow />
                    <div className="ml-1 h-[15px] w-[214px] bg-[#cdcdcd]" />
                    <Arrow className="ml-auto rotate-180" />
                </div>
            </div>
        </aside>
    );
}

function OsnapBar() {
    return (
        <div className="flex h-5 shrink-0 items-center gap-[7px] pt-[2px] pl-[9px] text-[13px] leading-4 text-[#767676]">
            {osnaps.map((o) => (
                <label key={o.label} className="flex items-center gap-1">
                    <span className="grid size-3">
                        <input type="checkbox" defaultChecked={o.on} className="peer col-start-1 row-start-1 size-3 appearance-none border border-[#c9c9c9] bg-white" />
                        <svg viewBox="0 0 12 12" className="pointer-events-none invisible col-start-1 row-start-1 size-3 peer-checked:visible">
                            <path d="M2 6l3 3 5-6" fill="none" stroke="#b0b0b0" strokeWidth="1.300" />
                        </svg>
                    </span>
                    {o.label}
                </label>
            ))}
            <label className="flex items-center gap-1">
                <input type="checkbox" className="size-3 appearance-none border border-[#c4c4c6] bg-[#c9c9cc]" />
                投影
            </label>
            <label className="ml-[13px] flex items-center gap-1 text-black">
                <input type="checkbox" className="size-3 appearance-none border border-[#1d4d7c] bg-[#7f93a5] outline-1 -outline-offset-2 outline-white" />
                停用
            </label>
        </div>
    );
}

function StatusBar() {
    const cell = "flex items-center justify-center border-r border-[#c0c5d0] whitespace-nowrap";
    const on = "bg-[#e0eef8] font-bold";
    return (
        <footer className="flex h-5 shrink-0 items-stretch border-t border-[#c0c5d0]">
            <button type="button" className={`${cell} w-[61px]`}>工作平面</button>
            <div className={`${cell} w-[88px]`}>x 0.000</div>
            <div className={`${cell} w-[88px]`}>y 0.000</div>
            <div className={`${cell} w-[88px]`}>z 0.000</div>
            <div className={`${cell} w-[88px]`}>毫米</div>
            <button type="button" className="flex w-[168px] items-center gap-[2px] border-r border-[#c0c5d0] pl-[3px]">
                <span className="size-[14px] bg-black" />
                默认值
            </button>
            <button type="button" className={`${cell} px-[7px]`}>锁定格点</button>
            <button type="button" className={`${cell} px-[6px]`}>正交</button>
            <button type="button" className={`${cell} px-[7px] ${on}`}>平面模式</button>
            <button type="button" className={`${cell} px-[6px]`}>物件锁点</button>
            <button type="button" className={`${cell} px-[7px] ${on}`}>智慧轨迹</button>
            <button type="button" className={`${cell} px-[6px] ${on}`}>操作轴</button>
            <button type="button" className={`${cell} px-[6px]`}>记录建构历史</button>
            <button type="button" className={`${cell} px-[7px]`}>过滤器</button>
            <div className="flex items-center pl-[2px]">可用的物理内存: 5399 MB</div>
        </footer>
    );
}

function PluginDialog() {
    const button = "h-7 w-[86px] border border-[#adadad] bg-[#e1e1e1]";
    return (
        <div role="dialog" aria-labelledby="dialog-title" className="absolute top-[305px] left-1/2 flex h-[423px] w-[534px] -translate-x-1/2 flex-col border border-[#4f5358] bg-[#efefef] shadow-[0_4px_14px_rgba(0,0,0,0.35)]">
            <h2 id="dialog-title" className="bg-white pl-2 leading-[30px]">插件程序安装完成，按[关闭]继续</h2>
            <p className="pt-[9px] pb-[18px] pl-3 leading-[30px]">插件程序安装完成，按[关闭]继续</p>
            <ul className="mx-3 grow border border-[#828790] bg-white p-[2px]">
                <li className="flex h-5 items-center">
                    <svg viewBox="0 0 14 14" className="mx-[2px] size-[14px]"><path d="M1 1l12 12M13 1L1 13" stroke="#3b4656" strokeWidth="2" /></svg>
                    <span className="grow bg-[#efefef] pl-[5px] leading-5">载入时发生错误 - KeyShot9RhinoPlugin.rhp</span>
                </li>
            </ul>
            <div className="flex justify-end gap-2 px-[13px] pt-3 pb-4">
                <button type="button" className={button}>详细数据(D)</button>
                <button type="button" className={button}>关闭(C)</button>
            </div>
        </div>
    );
}

function Watermark() {
    return (
        <div className="absolute right-[34px] bottom-[34px] flex h-10 w-[98px] items-center justify-center gap-[2px] rounded-sm bg-[#efeff2]/80 shadow-sm">
            <div className="text-center font-bold text-black">
                <p className="text-[21px] leading-6 font-black">学犀牛</p>
                <p className="text-[10px] leading-3 font-semibold">xuexiniu.com</p>
            </div>
            <p className="flex h-[30px] w-[19px] items-center justify-center bg-[#cc3648] text-[10px] leading-[10px] font-bold text-white [writing-mode:vertical-rl]">中文网</p>
        </div>
    );
}

export default function App() {
    return (
        <div className="relative flex h-screen flex-col overflow-hidden bg-[#e9eaee] font-['Noto_Sans','Noto_Sans_CJK_SC',sans-serif] text-xs text-black">
            <Gradients />
            <TitleBar />
            <nav className="flex h-5 shrink-0 items-center gap-[15px] bg-white pl-[7px] text-[#5f5f5f]">
                {menus.map((m) => <button key={m} type="button" className="whitespace-nowrap">{m}</button>)}
            </nav>
            <CommandArea />
            <ToolTabs />
            <div className="flex h-[39px] shrink-0 items-start pt-px pl-[6px]">
                {mainTools.map((t) => <ToolButton key={t.name} tool={t} />)}
            </div>

            <div className="flex min-h-0 grow">
                <aside className="w-[65px] shrink-0 px-1 pt-[2px]">
                    <div className="mb-px h-[3px] border-y border-[#cdd0d8]" />
                    <div className="-ml-1 grid w-14 grid-cols-2">
                        {sideTools.map((t) => <ToolButton key={t.name} tool={t} />)}
                    </div>
                </aside>
                <main className="flex min-w-0 grow flex-col">
                    <div className="grid min-h-0 grow grid-cols-2 grid-rows-2 gap-x-[3px] gap-y-1 bg-[#f1f2f6]">
                        <Viewport title="Top" axes={["y", "x"]}><FlatGrid /></Viewport>
                        <Viewport title="Perspective" current><PerspectiveGrid /></Viewport>
                        <Viewport title="Front" axes={["z", "x"]}><FlatGrid /></Viewport>
                        <Viewport axes={["z", "y"]}><FlatGrid /></Viewport>
                    </div>
                    <ViewTabs />
                </main>
                <LayerPanel />
            </div>

            <OsnapBar />
            <StatusBar />
            <div className="flex h-2 shrink-0 items-start justify-end gap-[148px] overflow-hidden bg-gradient-to-r from-[#22303f] via-[#1b1e24] to-[#22364a] pr-[74px] leading-4 text-white">
                <span>(ı)</span>
                <span>22:18</span>
            </div>

            <PluginDialog />
            <Watermark />
            <div className="absolute right-[2px] bottom-5 flex h-[57px] w-2 flex-col justify-end overflow-hidden rounded-full bg-[#555]">
                <div className="h-5 bg-[repeating-linear-gradient(#5fb878_0_1px,#3e7a50_1px_2px)]" />
            </div>
        </div>
    );
}
